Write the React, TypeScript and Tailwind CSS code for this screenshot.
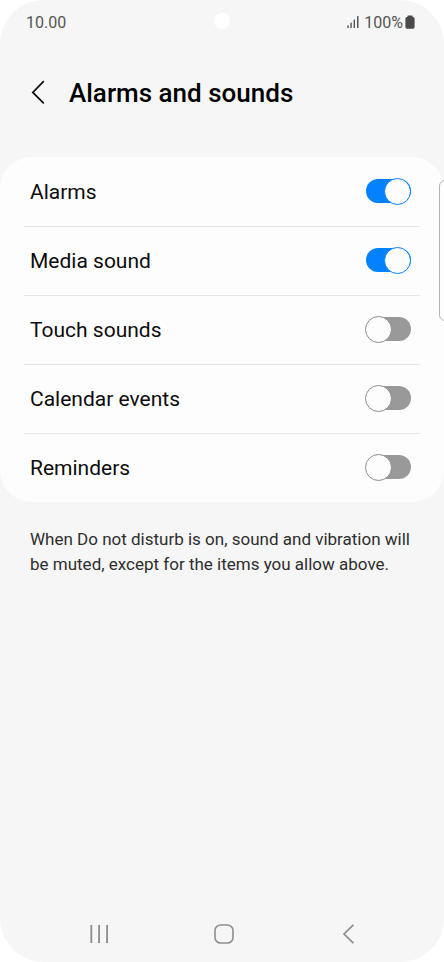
import { useState } from 'react';

interface ToggleRowProps {
  label: string;
  checked: boolean;
  onChange: () => void;
}

const initialItems = [
  { id: 'alarms', label: 'Alarms', enabled: true },
  { id: 'media', label: 'Media sound', enabled: true },
  { id: 'touch', label: 'Touch sounds', enabled: false },
  { id: 'calendar', label: 'Calendar events', enabled: false },
  { id: 'reminders', label: 'Reminders', enabled: false },
];

function StatusBar() {
  return (
    <div className="relative flex h-11 items-center justify-between pl-[26px] pr-[29px] text-base text-[#555555]">
      <span className="pt-px">10.00</span>
      <span className="absolute left-1/2 top-[13px] h-4 w-4 -translate-x-1/2 rounded-full bg-white" />
      <div className="flex items-center">
        <svg className="mr-[5px] h-3 w-3" viewBox="0 0 12 12" fill="#555555" aria-hidden="true">
          <rect x="0.3" y="9.2" width="1.4" height="2.8" rx="0.5" />
          <rect x="3.4" y="6.4" width="1.4" height="5.6" rx="0.5" />
          <rect x="6.6" y="3.4" width="1.4" height="8.6" rx="0.5" />
          <rect x="10" y="0" width="1.5" height="12" rx="0.5" />
        </svg>
        <span className="pt-px">100%</span>
        <svg className="ml-0.5 h-[14px] w-[10px]" viewBox="0 0 10 14" fill="#4a4a4a" aria-hidden="true">
          <path d="M3 0.4h4a0.6 0.6 0 0 1 0.6 0.6v0.9H8a1.6 1.6 0 0 1 1.6 1.6v8.6A1.6 1.6 0 0 1 8 13.7H2a1.6 1.6 0 0 1-1.6-1.6V3.5A1.6 1.6 0 0 1 2 1.9h0.4V1A0.6 0.6 0 0 1 3 0.4z" />
        </svg>
      </div>
    </div>
  );
}

function ToggleRow({ label, checked, onChange }: ToggleRowProps) {
  return (
    <label className="flex h-[69px] cursor-pointer items-center justify-between border-t border-[#e6e6e6] pb-0.5 pl-1.5 pr-[9px] first:border-t-0 first:pb-px">
      <span className="pt-px text-[21px] leading-7 text-[#0c0c0c]">{label}</span>
      <span className="relative flex h-7 w-[46px] items-center">
        <input
          type="checkbox"
          role="switch"
          checked={checked}
          onChange={onChange}
          className="peer sr-only"
        />
        <span className="ml-px h-6 w-full rounded-full bg-[#999999] peer-checked:bg-[#0381fe]" />
        <span className="absolute left-0 h-[27px] w-[27px] rounded-full border border-[#8c8c8c] bg-[#fdfdfd] peer-checked:left-auto peer-checked:right-0 peer-checked:border-[#0381fe]" />
      </span>
    </label>
  );
}

function NavigationBar() {
  return (
    <nav className="flex h-14 items-center justify-between pl-[79px] pr-[75px] text-[#8e8e8e]">
      <button type="button" aria-label="Recent apps" className="flex w-10 justify-center">
        <svg className="h-5 w-5" viewBox="0 0 20 20" fill="none" stroke="currentColor" strokeWidth="1.8">
          <path d="M2.3 1v18M10.1 1v18M18.1 1v18" />
        </svg>
      </button>
      <button type="button" aria-label="Home" className="flex w-10 justify-center">
        <svg className="h-5 w-5" viewBox="0 0 20 20" fill="none" stroke="currentColor" strokeWidth="1.6">
          <rect x="1" y="1" width="18" height="18" rx="5.5" />
        </svg>
      </button>
      <button type="button" aria-label="Back" className="flex w-10 justify-center">
        <svg className="h-5 w-5" viewBox="0 0 20 20" fill="none" stroke="currentColor" strokeWidth="1.7">
          <path d="M14.4 0.8L5 10l9.4 9.2" />
        </svg>
      </button>
    </nav>
  );
}

export default function App() {
  const [items, setItems] = useState(initialItems);

  const toggleItem = (id: string) => {
    setItems(items.map((item) => (item.id === id ? { ...item, enabled: !item.enabled } : item)));
  };

  return (
    <div className="min-h-screen bg-white font-['Roboto',sans-serif]">
      <div className="relative flex min-h-screen flex-col overflow-hidden rounded-[44px] bg-[#f6f6f6]">
        <StatusBar />

        <header className="flex h-[113px] items-start pl-7 pt-8">
          <button type="button" aria-label="Back" className="flex h-8 w-5 items-center justify-center">
            <svg className="h-6 w-5" viewBox="0 0 20 24" fill="none" stroke="#0c0c0c" strokeWidth="1.7">
              <path d="M15.8 1.2L4.8 12.4l11 11" />
            </svg>
          </button>
          <h1 className="ml-[21px] text-[26px] font-medium leading-[34px] text-black">Alarms and sounds</h1>
        </header>

        <main className="flex-1">
          <div className="rounded-[32px] bg-[#fdfdfd] px-6">
            {items.map((item) => (
              <ToggleRow
                key={item.id}
                label={item.label}
                checked={item.enabled}
                onChange={() => toggleItem(item.id)}
              />
            ))}
          </div>
          <p className="px-[30px] pt-[25px] text-[17px] leading-[25px] text-[#2e2e2e]">
            When Do not disturb is on, sound and vibration will be muted, except for the items you allow above.
          </p>
        </main>

        <NavigationBar />

        {/* Edge panel handle */}
        <span className="absolute -right-1 top-[180px] h-[141px] w-[9px] rounded-l-md border border-[#b5b5b5] bg-[#fdfdfd]" />
      </div>
    </div>
  );
}
